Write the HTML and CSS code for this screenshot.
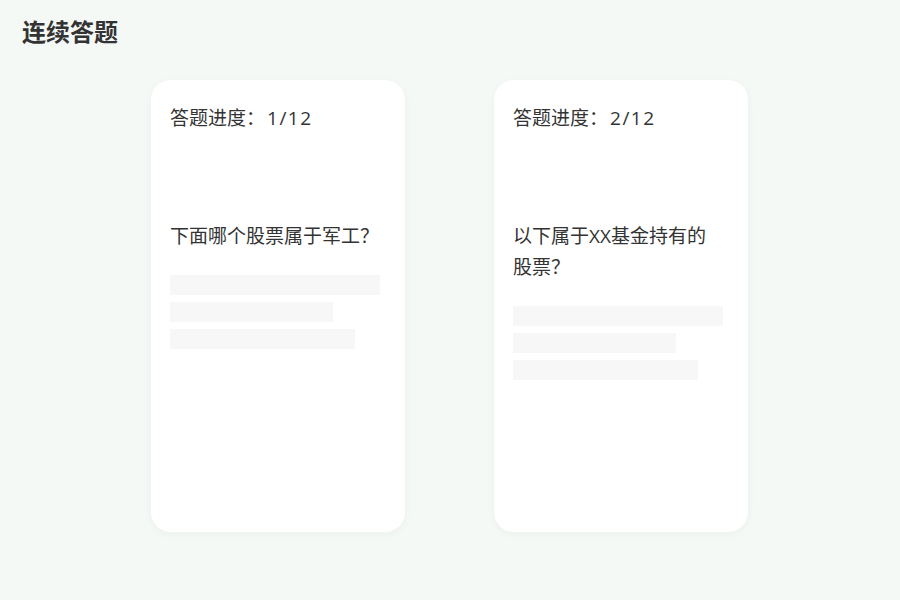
FILE: index.html
```html
<!DOCTYPE html>
<html lang="zh-CN">
<head>
<meta charset="utf-8">
<title>连续答题</title>
<link rel="stylesheet" href="styles.css">
</head>
<body>
<header class="page-head">
  <h1 class="page-title">连续答题</h1>
</header>
<main class="deck">
  <section class="card">
    <div class="progress">答题进度：<span class="progress-num">1/12</span></div>
    <div class="question">下面哪个股票属于军工？</div>
    <div class="options">
      <div class="option-bar" style="width:210px"></div>
      <div class="option-bar" style="width:163px"></div>
      <div class="option-bar" style="width:185px"></div>
    </div>
  </section>
  <section class="card">
    <div class="progress">答题进度：<span class="progress-num">2/12</span></div>
    <div class="question">以下属于XX基金持有的股票？</div>
    <div class="options">
      <div class="option-bar" style="width:210px"></div>
      <div class="option-bar" style="width:163px"></div>
      <div class="option-bar" style="width:185px"></div>
    </div>
  </section>
</main>
</body>
</html>
```

FILE: styles.css
```css
* {
  box-sizing: border-box;
}

html, body {
  margin: 0;
  padding: 0;
}

body {
  width: 900px;
  height: 600px;
  background: #f4f9f6;
  font-family: "Open Sans", "Noto Sans CJK SC", sans-serif;
  color: #333333;
  overflow: hidden;
}

.page-head {
  padding: 15px 22px 0;
  height: 80px;
}

.page-title {
  margin: 0;
  font-family: "Noto Sans CJK SC", sans-serif;
  font-size: 24px;
  line-height: 32px;
  font-weight: 700;
  color: #333333;
}

.deck {
  display: flex;
  gap: 89px;
  padding-left: 151px;
}

.card {
  width: 254px;
  height: 452px;
  background: #ffffff;
  border-radius: 20px;
  box-shadow: 0 2px 8px rgba(0, 60, 30, 0.04);
  padding: 24px 25px 0 19px;
  display: flex;
  flex-direction: column;
}

.progress {
  font-size: 19px;
  line-height: 28px;
  color: #333333;
}

.progress-num {
  margin-left: 2px;
  letter-spacing: 1.5px;
}

.question {
  margin-top: 89px;
  font-size: 19px;
  line-height: 31px;
  color: #333333;
}

.options {
  margin-top: 23px;
  display: flex;
  flex-direction: column;
  gap: 7px;
}

.option-bar {
  height: 20px;
  background: #f7f7f7;
}
```
